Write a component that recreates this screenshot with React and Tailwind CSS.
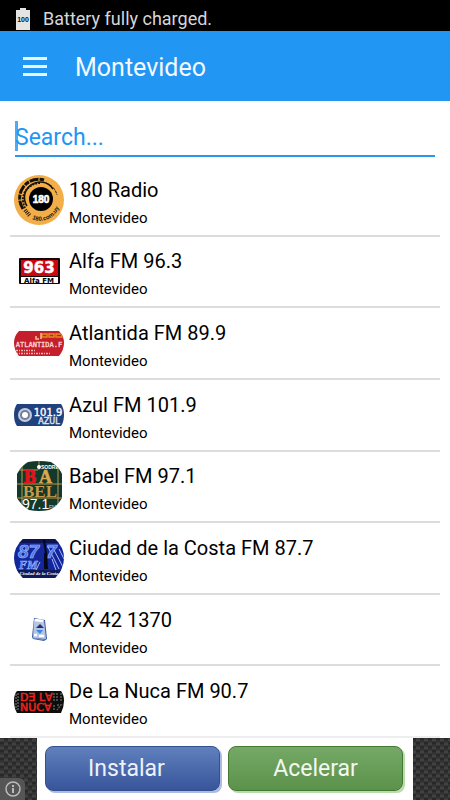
import React, { useState } from 'react';

const Logo180 = () => (
  <svg viewBox="0 0 50 50" className="w-full" aria-hidden="true">
    <circle cx="25" cy="25" r="25" fill="#f2ae49" />
    <circle cx="27" cy="24" r="12" fill="#000" />
    <g fill="none" stroke="#17110a">
      <path d="M9 34A19 19 0 0 1 30 5" strokeWidth="3" strokeDasharray="9 1 5 1" />
      <path d="M11 33A17 17 0 0 1 26 8" strokeWidth="2" strokeDasharray="2 1" />
      <path d="M13 31A15 15 0 0 1 39 14" strokeWidth="1.5" />
      <path d="M32 8A17 17 0 0 1 43 20" strokeWidth="1" strokeDasharray="3 1" />
      <path d="M11 35L16 41" strokeWidth="4" strokeDasharray="1 1" />
    </g>
    <text x="27" y="28" textAnchor="middle" fill="#fff" stroke="#fff" strokeWidth="0.6" fontSize="10" fontWeight="700" className="font-['Liberation_Sans']">180</text>
    <path id="ring180" d="M18 44A20 20 0 0 0 46 28" fill="none" />
    <text fill="#17110a" fontSize="6" fontWeight="700" className="font-['Liberation_Sans']">
      <textPath href="#ring180">180.com.uy</textPath>
    </text>
  </svg>
);

const LogoAlfa = () => (
  <svg viewBox="0 0 50 50" className="w-full" aria-hidden="true">
    <rect x="5" y="12" width="41" height="26" rx="1" fill="#140606" />
    <rect x="7" y="14" width="37" height="16" fill="#cc0710" />
    <rect x="7" y="31" width="37" height="6" fill="#fff" />
    <text x="25" y="27" textAnchor="middle" fill="#fff" stroke="#fff" strokeWidth="0.5" fontSize="15" fontWeight="700" className="font-['DejaVu_Sans']">963</text>
    <text x="25" y="37" textAnchor="middle" fill="#000" fontSize="7" fontWeight="700" className="font-['DejaVu_Sans']">Alfa FM</text>
  </svg>
);

const LogoAtlantida = () => (
  <svg viewBox="0 0 50 50" className="w-full" aria-hidden="true">
    <clipPath id="clipAtlantida"><path d="M5 13H45Q50 18 50 25T45 38H5Q0 32 0 25T5 13Z" /></clipPath>
    <g clipPath="url(#clipAtlantida)">
      <rect y="13" width="50" height="25" fill="#c51f2b" />
      <path d="M28 16H33V19H28ZM35 16H40V19H35ZM42 16H48V19H42Z" stroke="#e28a20" strokeWidth="1.5" fill="none" />
      <path d="M22 18v3h3M27 15v6" stroke="#f2c29a" strokeWidth="1.5" fill="none" />
      <text x="25" y="29" textAnchor="middle" fill="#ffd9d6" stroke="#ffd9d6" strokeWidth="0.3" fontSize="7" className="font-['DejaVu_Sans_Mono']">ATLANTIDA.F</text>
      <path d="M2 32.5h19M2 35.5h35" stroke="#f2b5b3" strokeWidth="1.5" strokeDasharray="2 1 1 1" />
    </g>
  </svg>
);

const LogoAzul = () => (
  <svg viewBox="0 0 50 50" className="w-full" aria-hidden="true">
    <path d="M3 14H47Q50 18 50 25T47 36H3Q0 32 0 25T3 14Z" fill="#21417e" />
    <circle cx="11" cy="25" r="7" fill="#c5cbd8" />
    <circle cx="11" cy="25" r="5" fill="#6e7f9f" />
    <circle cx="11" cy="25" r="3" fill="#fff" />
    <text x="34" y="26" textAnchor="middle" fill="#fff" stroke="#fff" strokeWidth="0.4" fontSize="10" className="font-['DejaVu_Sans']">101.9</text>
    <text x="35" y="34" textAnchor="middle" fill="#dfe5f2" stroke="#dfe5f2" strokeWidth="0.4" fontSize="8" className="font-['DejaVu_Sans']">AZUL</text>
  </svg>
);

const LogoBabel = () => (
  <svg viewBox="0 0 50 50" className="w-full" aria-hidden="true">
    <clipPath id="clipBabel"><path d="M14 1Q25 -1 37 1Q45 6 48 13V37Q43 46 35 49Q25 51 15 49Q7 44 3 37V13Q7 5 14 1Z" /></clipPath>
    <g clipPath="url(#clipBabel)">
      <rect width="50" height="50" fill="#12392a" />
      <path d="M8 0V50M25 0V9M44 8V50M0 9H24M0 23H50M0 37H50" stroke="#b99a50" strokeWidth="1" />
      <circle cx="25" cy="6" r="2" fill="#fff" />
      <text x="27" y="8" fill="#fff" fontSize="5" fontWeight="700" className="font-['Liberation_Sans']">SODRE</text>
      <text x="10" y="22" fill="#e3141b" stroke="#e3141b" fontSize="18" fontWeight="700" className="font-['Liberation_Serif']">B</text>
      <text x="25" y="22" fill="#dba94f" stroke="#dba94f" strokeWidth="0.5" fontSize="18" fontWeight="700" className="font-['Liberation_Serif']">A</text>
      <text x="26" y="36" textAnchor="middle" fill="#c79a4a" fontSize="17" fontWeight="700" className="font-['Liberation_Serif']">BEL</text>
      <text x="8" y="48" fill="#fff" fontSize="14" className="font-['Liberation_Sans']">97.1</text>
      <text x="35" y="48" fill="#d8dfd9" fontSize="5" className="font-['Liberation_Sans']">FM</text>
    </g>
  </svg>
);

const LogoCiudad = () => (
  <svg viewBox="0 0 50 50" className="w-full" aria-hidden="true">
    <clipPath id="clipCiudad"><path d="M9 6H41Q50 14 50 25T41 45H9Q0 36 0 25T9 6Z" /></clipPath>
    <g clipPath="url(#clipCiudad)">
      <rect width="50" height="50" fill="#14279a" />
      <rect y="6" width="50" height="4" fill="#0c1452" />
      <path d="M34 14L45 36M40 17L49 34M45 16L50 26M38 26L42 37M26 29L22 37" stroke="#a4bbff" strokeWidth="1" />
      <text x="4" y="25" fill="#4f74e6" stroke="#a9c0ff" strokeWidth="0.6" fontSize="19" fontWeight="700" fontStyle="italic" className="font-['Liberation_Sans']">87</text>
      <text x="32" y="25" fill="#4f74e6" stroke="#a9c0ff" strokeWidth="0.6" fontSize="19" fontWeight="700" fontStyle="italic" className="font-['Liberation_Sans']">7</text>
      <text x="5" y="36" fill="#4f74e6" stroke="#9db5ff" strokeWidth="0.5" fontSize="12" fontWeight="700" fontStyle="italic" className="font-['Liberation_Serif']">FM</text>
      <path d="M30 7L32 20L33 36M31 36L31 20" stroke="#030719" strokeWidth="2" fill="none" />
      <rect y="37" width="50" height="8" fill="#101b59" />
      <text x="25" y="42" textAnchor="middle" fill="#fff" fontSize="5" fontWeight="700" fontStyle="italic" className="font-['Liberation_Serif']">Ciudad de la Costa</text>
    </g>
  </svg>
);

const LogoCx42 = () => (
  <svg viewBox="0 0 50 50" className="w-full" aria-hidden="true">
    <path d="M20 13L31 15L33 34L30 36L19 34L18 32Z" fill="#36599f" />
    <path d="M20 14L30 15L32 34L19 33Z" fill="#b9c4e2" />
    <path d="M21 15L29 16M20 30L23 30M25 31L30 31" stroke="#fff" strokeWidth="2.5" />
    <path d="M22 23L26 19L30 23Z" fill="#202f79" />
    <path d="M22 25H29L26 29Z" fill="#338be4" />
    <path d="M19 33L31 35" stroke="#7793cb" strokeWidth="1" />
  </svg>
);

const LogoNuca = () => (
  <svg viewBox="0 0 50 50" className="w-full" aria-hidden="true">
    <path d="M3 15H47Q50 19 50 25T47 37H3Q0 32 0 25T3 15Z" fill="#0d0d0c" />
    <path d="M2 18V34M4 17V35M40 17V25M43 17V25M47 17V25M40 29V34M43 29H47L43 34" stroke="#5a5e59" strokeWidth="1.5" strokeDasharray="2 1" fill="none" />
    <g fill="#ee2420" stroke="#ee2420" strokeWidth="0.5" fontSize="11" className="font-['DejaVu_Sans']">
      <text x="6" y="25">DƎ L∀</text>
      <text x="6" y="35">NUC∀</text>
    </g>
  </svg>
);

const stations = [
  { name: '180 Radio', city: 'Montevideo', Logo: Logo180 },
  { name: 'Alfa FM 96.3', city: 'Montevideo', Logo: LogoAlfa },
  { name: 'Atlantida FM 89.9', city: 'Montevideo', Logo: LogoAtlantida },
  { name: 'Azul FM 101.9', city: 'Montevideo', Logo: LogoAzul },
  { name: 'Babel FM 97.1', city: 'Montevideo', Logo: LogoBabel },
  { name: 'Ciudad de la Costa FM 87.7', city: 'Montevideo', Logo: LogoCiudad },
  { name: 'CX 42 1370', city: 'Montevideo', Logo: LogoCx42 },
  { name: 'De La Nuca FM 90.7', city: 'Montevideo', Logo: LogoNuca },
];

const StatusBar = () => (
  <div className="flex h-[31px] shrink-0 items-center bg-black px-4 pt-[6px]">
    <svg viewBox="0 0 14 22" className="h-[22px] w-[14px]" aria-hidden="true">
      <path d="M4 0H10V2H14V22H0V2H4Z" fill="#e4e4e4" />
      <text x="7" y="14" textAnchor="middle" fontSize="7" fontWeight="700" fill="#111" className="font-['Liberation_Sans']">100</text>
    </svg>
    <span className="ml-[13px] text-[18px] leading-6 text-[#d6d6d6]">Battery fully charged.</span>
  </div>
);

const AppBar = () => (
  <header className="flex h-[70px] shrink-0 items-center bg-[#2196f3] px-[23px]">
    <button type="button" aria-label="Open menu" className="flex w-6 flex-col gap-[5px]">
      <span className="h-[3px] w-full bg-[#e8f4fe]" />
      <span className="h-[3px] w-full bg-[#e8f4fe]" />
      <span className="h-[3px] w-full bg-[#e8f4fe]" />
    </button>
    <h1 className="ml-7 pt-1 text-[25px] leading-8 text-[#f3f9ff]">Montevideo</h1>
  </header>
);

// Dark woven strip behind the banner
const CarbonBackground = () => (
  <svg className="absolute inset-0 h-full w-full" aria-hidden="true">
    <defs>
      <pattern id="carbon" width="8" height="8" patternUnits="userSpaceOnUse">
        <rect width="8" height="8" fill="#2c2c2c" />
        <path d="M0 2H4M4 6H8" stroke="#414141" strokeWidth="3" />
        <path d="M4 1H8M0 5H4" stroke="#242424" strokeWidth="1" />
        <path d="M4 3H8M0 7H4" stroke="#363636" strokeWidth="1" />
      </pattern>
    </defs>
    <rect width="100%" height="100%" fill="url(#carbon)" />
  </svg>
);

const AdBanner = () => (
  <aside className="relative flex h-[62px] shrink-0">
    <CarbonBackground />
    <div className="relative mx-[37px] grid flex-1 grid-cols-2 items-start gap-2 bg-white pt-2 pr-[10px] pl-2">
      <button
        type="button"
        className="h-[45px] rounded-lg border border-[#33508f] bg-linear-to-b from-[#6080bd] to-[#38559a] pr-3 text-[23px] leading-none text-[#edf1fa] shadow-[2px_2px_0_#adbbe0]"
      >
        Instalar
      </button>
      <button
        type="button"
        className="h-[45px] rounded-lg border border-[#427a34] bg-linear-to-b from-[#75a866] to-[#5c924c] text-[23px] leading-none text-[#f2f8ef] shadow-[2px_2px_0_#badbac]"
      >
        Acelerar
      </button>
    </div>
    <button
      type="button"
      aria-label="Ad information"
      className="absolute bottom-0 left-0 flex h-[22px] w-[25px] items-center justify-center rounded-tr-md bg-[#555]"
    >
      <svg viewBox="0 0 16 16" className="h-4 w-4" fill="none" stroke="#bbb" strokeWidth="1.5" aria-hidden="true">
        <circle cx="8" cy="8" r="7" />
        <path d="M8 7V12M8 4V6" strokeWidth="2" />
      </svg>
    </button>
  </aside>
);

const App = () => {
  const [search, setSearch] = useState('');

  const filtered = stations.filter((station) =>
    station.name.toLowerCase().includes(search.toLowerCase())
  );

  return (
    <div className="flex min-h-screen flex-col bg-white font-['Roboto',sans-serif]">
      <StatusBar />
      <AppBar />

      <main className="flex flex-1 flex-col">
        <div className="px-[15px] pt-4 pb-2">
          <div className="relative border-b-2 border-[#2b96ea]">
            <input
              type="text"
              aria-label="Search stations"
              placeholder="Search..."
              value={search}
              onChange={(e) => setSearch(e.target.value)}
              className="block h-[38px] w-full bg-transparent pt-[3px] text-[23px] text-black outline-none placeholder:text-[#2196f3]"
            />
            {search === '' && <span className="absolute top-1 left-0 h-[30px] w-[3px] bg-[#2196f3]/80" />}
          </div>
        </div>

        <ul className="flex flex-1 flex-col px-[10px]">
          {filtered.map(({ name, city, Logo }) => (
            <li key={name} className="flex flex-1 items-center border-b-2 border-[#dcdcdc] px-1 last:border-[#eee]">
              <div className="w-[50px] shrink-0">
                <Logo />
              </div>
              <div className="ml-[5px] pt-[6px]">
                <h2 className="text-[20px] leading-7 text-black">{name}</h2>
                <p className="pt-[2px] text-[15px] leading-6 text-black">{city}</p>
              </div>
            </li>
          ))}
        </ul>
      </main>

      <AdBanner />
    </div>
  );
};

export default App;
